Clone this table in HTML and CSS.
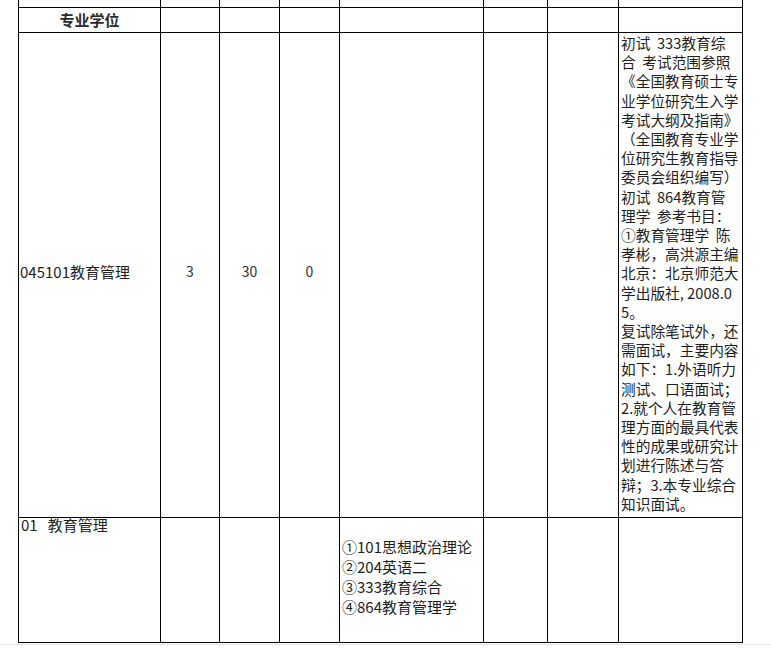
FILE: index.html
```html
<!DOCTYPE html>
<html lang="zh-CN">
<head>
<meta charset="utf-8">
<title>专业学位</title>
<link rel="stylesheet" href="styles.css">
</head>
<body>
<div class="page">
<table class="grid">
  <colgroup>
    <col class="c1"><col class="c2"><col class="c3"><col class="c4"><col class="c5"><col class="c6"><col class="c7"><col class="c8">
  </colgroup>
  <tr class="r-top">
    <td></td><td></td><td></td><td></td><td></td><td></td><td></td><td></td>
  </tr>
  <tr class="r-head">
    <td class="head">专业学位</td><td></td><td></td><td></td><td></td><td></td><td></td><td></td>
  </tr>
  <tr class="r-main">
    <td class="name">045101教育管理</td>
    <td class="num">3</td>
    <td class="num">30</td>
    <td class="num">0</td>
    <td></td>
    <td></td>
    <td></td>
    <td class="note">初试&nbsp;&nbsp;333教育综<br>合&nbsp;&nbsp;考试范围参照<br>《全国教育硕士专<br>业学位研究生入学<br>考试大纲及指南》<br>（全国教育专业学<br>位研究生教育指导<br>委员会组织编写）<br>初试&nbsp;&nbsp;864教育管<br>理学&nbsp;&nbsp;参考书目：<br>①教育管理学&nbsp;&nbsp;陈<br>孝彬，高洪源主编<br>北京：北京师范大<br>学出版社, 2008.0<br>5。<br>复试除笔试外，还<br>需面试，主要内容<br>如下：1.外语听力<br>测试、口语面试；<br>2.就个人在教育管<br>理方面的最具代表<br>性的成果或研究计<br>划进行陈述与答<br>辩；3.本专业综合<br>知识面试。</td>
  </tr>
  <tr class="r-sub">
    <td class="dir">01&nbsp;&nbsp;&nbsp;教育管理</td>
    <td></td>
    <td></td>
    <td></td>
    <td class="exam">①101思想政治理论<br>②204英语二<br>③333教育综合<br>④864教育管理学</td>
    <td></td>
    <td></td>
    <td></td>
  </tr>
</table>
<div class="rule"></div>
</div>
</body>
</html>
```

FILE: styles.css
```css
html, body {
  margin: 0;
  padding: 0;
  background: #ffffff;
}

.page {
  width: 771px;
  height: 649px;
  overflow: hidden;
  font-family: "Noto Sans CJK SC", "Noto Sans", sans-serif;
  color: #1e1e1e;
}

.grid {
  border-collapse: collapse;
  table-layout: fixed;
  width: 725px;
  margin: -13px 0 0 18px;
}

.grid td {
  border: 1px solid #000;
  padding: 0;
  font-size: 15px;
  line-height: 19px;
  vertical-align: middle;
  white-space: nowrap;
  overflow: hidden;
}

.c1 { width: 142px; }
.c2 { width: 59px; }
.c3 { width: 60px; }
.c4 { width: 60px; }
.c5 { width: 144px; }
.c6 { width: 64px; }
.c7 { width: 71px; }
.c8 { width: 124px; }

.r-top { height: 20px; }
.r-head { height: 25px; }
.r-main { height: 484px; }
.r-sub { height: 125px; }

.grid td.head {
  text-align: center;
  font-weight: 700;
  font-size: 15px;
  color: #2a2a2a;
  padding-bottom: 2px;
}

.grid td.name {
  padding: 0 0 7px 1px;
}

.grid td.num {
  text-align: center;
  color: #333;
  font-size: 14px;
  padding-bottom: 7px;
}

.grid td.note {
  padding: 0 0 4px 2px;
  line-height: 19.2px;
  font-size: 14.7px;
  vertical-align: top;
}

.grid td.dir {
  vertical-align: top;
  padding: 0 0 0 2px;
  line-height: 14px;
  overflow: visible;
}

.grid td.exam {
  padding: 0 0 6px 2px;
  line-height: 20px;
}

.rule {
  margin-top: 1px;
  height: 0;
  border-top: 1px solid #e4e4e4;
}
```
